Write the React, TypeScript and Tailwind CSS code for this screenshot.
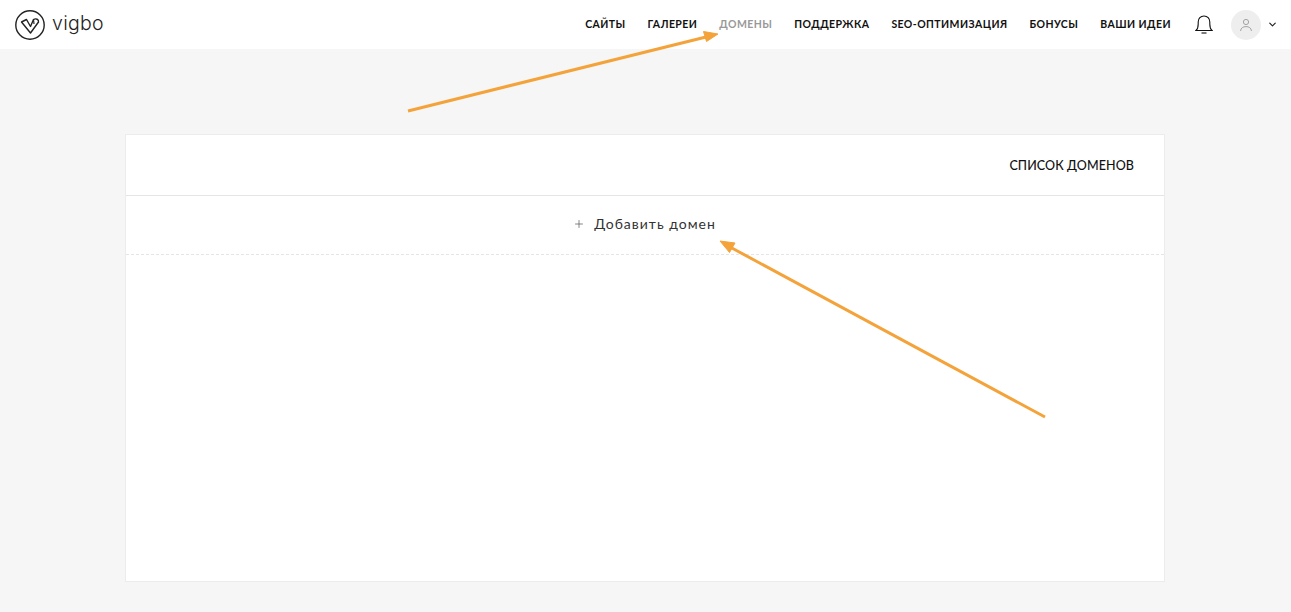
import { ChevronDown, Plus } from 'lucide-react';

const navItems = ['САЙТЫ', 'ГАЛЕРЕИ', 'ДОМЕНЫ', 'ПОДДЕРЖКА', 'SEO-ОПТИМИЗАЦИЯ', 'БОНУСЫ', 'ВАШИ ИДЕИ'];

function Logo() {
    return (
        <svg width="32" height="32" viewBox="0 0 32 32" fill="none" stroke="#222" className="shrink-0">
            <circle cx="16" cy="16" r="14.2" strokeWidth="1.4" />
            <path d="M7.5 13 L12.5 10.5 L16.5 17.5 L19.5 10.5 C22 9 25 10.5 24.5 13 L16.5 24 Z" strokeWidth="1.4" strokeLinejoin="round" />
            <path d="M19.5 10.5 L20 15" strokeWidth="1.2" />
        </svg>
    );
}

function Bell() {
    return (
        <svg width="18" height="20" viewBox="0 0 18 20" fill="none" stroke="#111" strokeWidth="1.1">
            <path d="M1 15.5 C2.8 14 3.2 12.5 3.2 9 V7 C3.2 3.6 5.6 1 9 1 C12.4 1 14.8 3.6 14.8 7 V9 C14.8 12.5 15.2 14 17 15.5 Z" />
            <path d="M6.5 18 H11.5" />
        </svg>
    );
}

function UserIcon() {
    return (
        <svg width="14" height="14" viewBox="0 0 14 14" fill="none" stroke="#a3a3a3" strokeWidth="1">
            <circle cx="7" cy="4" r="2.6" />
            <path d="M1.5 13 C2 9.8 4 8.6 7 8.6 C10 8.6 12 9.8 12.5 13" />
        </svg>
    );
}

export default function App() {
    return (
        <div className="relative min-h-[612px] bg-[#f6f6f6] font-['Lato','Open_Sans',sans-serif] overflow-hidden">
            <header className="h-[49px] bg-white flex items-center justify-between pl-[14px] pr-[13px]">
                <div className="flex items-center gap-[6px]">
                    <Logo />
                    <span className="font-['Inter',sans-serif] text-[19.5px] font-light text-[#222] tracking-[0.3px] leading-none pb-[2px]">vigbo</span>
                </div>
                <div className="flex items-center">
                    <nav className="flex items-center gap-[22px]">
                        {navItems.map((item) => (
                            <a
                                key={item}
                                className={`text-[10.5px] font-bold tracking-[0.43px] leading-none pb-[1px] ${item === 'ДОМЕНЫ' ? 'text-[#999]' : 'text-[#111]'}`}
                            >
                                {item}
                            </a>
                        ))}
                    </nav>
                    <div className="ml-[24px]">
                        <Bell />
                    </div>
                    <div className="ml-[18px] w-[30px] h-[30px] rounded-full bg-[#eeeeee] flex items-center justify-center">
                        <UserIcon />
                    </div>
                    <ChevronDown className="ml-[6px] w-[11px] h-[11px] text-[#222]" strokeWidth={2.5} />
                </div>
            </header>

            <main className="mt-[85px] ml-[125px] mr-[126px] mb-[30px] h-[448px] bg-white border border-[#ececec]">
                <div className="h-[61px] border-b border-[#e5e5e5] flex items-center justify-end pr-[30px] pt-[3px]">
                    <span className="text-[12.5px] font-medium text-[#111] tracking-[0.1px]">СПИСОК ДОМЕНОВ</span>
                </div>
                <div className="h-[59px] border-b border-dashed border-[#e5e5e5] flex items-center justify-center gap-[9px] pb-[3px] pr-[1px]">
                    <Plus className="w-[12px] h-[12px] text-[#555]" strokeWidth={1.4} />
                    <span className="text-[14px] text-[#333] tracking-[1px]">Добавить домен</span>
                </div>
            </main>

            {/* annotation arrows */}
            <svg className="absolute inset-0 pointer-events-none" width="1291" height="612" fill="none">
                <path d="M408 111 L708 36.5" stroke="#f4a33a" strokeWidth="3" />
                <path d="M718 34 L703.5 31.5 L706.5 41.5 Z" fill="#f4a33a" stroke="#f4a33a" />
                <path d="M1045 417 L730 247" stroke="#f4a33a" strokeWidth="3" />
                <path d="M720 241 L735 243 L729.5 252.5 Z" fill="#f4a33a" stroke="#f4a33a" />
            </svg>
        </div>
    );
}
